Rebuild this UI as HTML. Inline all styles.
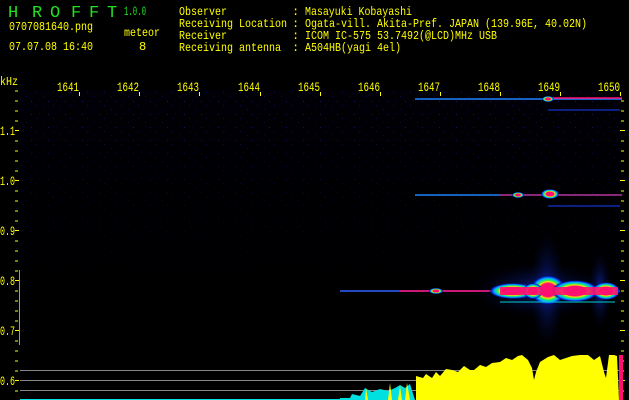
<!DOCTYPE html>
<html><head><style>
html,body{margin:0;padding:0;background:#000;width:629px;height:400px;overflow:hidden}
svg{display:block}
text{font-family:"Liberation Mono","DejaVu Sans Mono",monospace}
</style></head><body>
<svg width="629" height="400" viewBox="0 0 629 400" xmlns="http://www.w3.org/2000/svg">
<defs>
<pattern id="nz" width="17" height="13" patternUnits="userSpaceOnUse">
<rect width="17" height="13" fill="#000006"/>
<rect x="2" y="1" width="1" height="1" fill="#0c1458"/>
<rect x="9" y="5" width="1" height="1" fill="#080e48"/>
<rect x="14" y="10" width="1" height="1" fill="#101a70"/>
<rect x="5" y="9" width="1" height="1" fill="#060a38"/>
</pattern>
<linearGradient id="fade" x1="0" y1="0" x2="0" y2="1">
<stop offset="0" stop-color="#000" stop-opacity="0"/>
<stop offset="0.4" stop-color="#000" stop-opacity="0.6"/>
<stop offset="0.8" stop-color="#000" stop-opacity="1"/>
</linearGradient>
<radialGradient id="blob">
<stop offset="0" stop-color="#ff1070"/>
<stop offset="0.45" stop-color="#ff1070"/>
<stop offset="0.55" stop-color="#ffe000"/>
<stop offset="0.65" stop-color="#20f060"/>
<stop offset="0.78" stop-color="#00b0ff"/>
<stop offset="0.9" stop-color="#0020d0"/>
<stop offset="1" stop-color="#000020" stop-opacity="0"/>
</radialGradient>
<radialGradient id="glow">
<stop offset="0" stop-color="#1030d0" stop-opacity="0.7"/>
<stop offset="1" stop-color="#000020" stop-opacity="0"/>
</radialGradient>
</defs>
<rect x="20" y="90" width="603" height="310" fill="url(#nz)"/>
<rect x="20" y="90" width="603" height="310" fill="url(#fade)"/>
<!-- header -->
<g fill="#20e020" font-size="17"><text x="8" y="17">H</text><text x="32" y="17">R</text><text x="50" y="17">O</text><text x="71" y="17">F</text><text x="89" y="17">F</text><text x="107" y="17">T</text></g>
<text x="124" y="15" fill="#20e020" font-size="13" textLength="22" lengthAdjust="spacingAndGlyphs">1.0.0</text>
<g fill="#ffff00" font-size="12">
<text x="9" y="30" textLength="84" lengthAdjust="spacingAndGlyphs">0707081640.png</text>
<text x="124" y="36" textLength="36" lengthAdjust="spacingAndGlyphs">meteor</text>
<text x="9" y="50" textLength="84" lengthAdjust="spacingAndGlyphs">07.07.08 16:40</text>
<text x="139" y="50">8</text>
<text x="179" y="15" textLength="48" lengthAdjust="spacingAndGlyphs">Observer</text>
<text x="179" y="27" textLength="108" lengthAdjust="spacingAndGlyphs">Receiving Location</text>
<text x="179" y="39" textLength="48" lengthAdjust="spacingAndGlyphs">Receiver</text>
<text x="179" y="51" textLength="102" lengthAdjust="spacingAndGlyphs">Receiving antenna</text>
<text x="292" y="15">:</text><text x="292" y="27">:</text><text x="292" y="39">:</text><text x="292" y="51">:</text>
<text x="305" y="15" textLength="107" lengthAdjust="spacingAndGlyphs">Masayuki Kobayashi</text>
<text x="305" y="27" textLength="282" lengthAdjust="spacingAndGlyphs">Ogata-vill. Akita-Pref. JAPAN (139.96E, 40.02N)</text>
<text x="305" y="39" textLength="192" lengthAdjust="spacingAndGlyphs">ICOM IC-575 53.7492(@LCD)MHz USB</text>
<text x="305" y="51" textLength="96" lengthAdjust="spacingAndGlyphs">A504HB(yagi 4el)</text>
<text x="0" y="85" textLength="18" lengthAdjust="spacingAndGlyphs">kHz</text>
</g>
<g fill="#ffff00" font-size="13">
<text x="57" y="91" textLength="22" lengthAdjust="spacingAndGlyphs">1641</text><text x="117" y="91" textLength="22" lengthAdjust="spacingAndGlyphs">1642</text><text x="177" y="91" textLength="22" lengthAdjust="spacingAndGlyphs">1643</text><text x="238" y="91" textLength="22" lengthAdjust="spacingAndGlyphs">1644</text><text x="298" y="91" textLength="22" lengthAdjust="spacingAndGlyphs">1645</text><text x="358" y="91" textLength="22" lengthAdjust="spacingAndGlyphs">1646</text><text x="418" y="91" textLength="22" lengthAdjust="spacingAndGlyphs">1647</text><text x="478" y="91" textLength="22" lengthAdjust="spacingAndGlyphs">1648</text><text x="538" y="91" textLength="22" lengthAdjust="spacingAndGlyphs">1649</text><text x="598" y="91" textLength="22" lengthAdjust="spacingAndGlyphs">1650</text>
<text x="0" y="135" textLength="15" lengthAdjust="spacingAndGlyphs">1.1</text><text x="0" y="185" textLength="15" lengthAdjust="spacingAndGlyphs">1.0</text><text x="0" y="235" textLength="15" lengthAdjust="spacingAndGlyphs">0.9</text><text x="0" y="285" textLength="15" lengthAdjust="spacingAndGlyphs">0.8</text><text x="0" y="335" textLength="15" lengthAdjust="spacingAndGlyphs">0.7</text><text x="0" y="385" textLength="15" lengthAdjust="spacingAndGlyphs">0.6</text>
</g>
<g stroke="#ffff00" stroke-width="1">
<path d="M79.5 92v4M139.5 92v4M199.5 92v4M260.5 92v4M320.5 92v4M380.5 92v4M440.5 92v4M500.5 92v4M560.5 92v4M620.5 92v4"/>
<path d="M15 91h3M15 101h3M15 111h3M15 121h3M15 141h3M15 151h3M15 161h3M15 171h3M15 191h3M15 201h3M15 211h3M15 221h3M15 241h3M15 251h3M15 261h3M15 271h3M15 291h3M15 301h3M15 311h3M15 321h3M15 341h3M15 351h3M15 361h3M15 371h3M15 391h3"/>
<path d="M15 130.5h4M15 180.5h4M15 230.5h4M15 280.5h4M15 330.5h4M15 380.5h4"/>
<path d="M621 101h3M621 111h3M621 121h3M621 141h3M621 151h3M621 161h3M621 171h3M621 191h3M621 201h3M621 211h3M621 221h3M621 241h3M621 251h3M621 261h3M621 271h3M621 291h3M621 301h3M621 311h3M621 321h3M621 341h3M621 351h3M621 361h3M621 371h3M621 391h3"/>
<path d="M620 130.5h5M620 180.5h5M620 230.5h5M620 280.5h5M620 330.5h5M620 380.5h5"/>
</g>
<line x1="19.5" y1="270" x2="19.5" y2="345" stroke="#999" stroke-width="1"/>
<!-- signals -->
<ellipse cx="547" cy="290" rx="18" ry="60" fill="url(#glow)"/>
<ellipse cx="540" cy="290" rx="70" ry="28" fill="url(#glow)"/>
<ellipse cx="600" cy="290" rx="12" ry="40" fill="url(#glow)"/>
<line x1="340" y1="291" x2="620" y2="291" stroke="#3060ff" stroke-width="1.5"/>
<line x1="400" y1="291" x2="500" y2="291" stroke="#ff1070" stroke-width="1.5"/>
<ellipse cx="436" cy="291" rx="7" ry="3" fill="url(#blob)"/>
<ellipse cx="513" cy="291" rx="24" ry="8" fill="url(#blob)"/>
<ellipse cx="548" cy="290" rx="18" ry="15" fill="url(#blob)"/>
<ellipse cx="575" cy="291" rx="24" ry="11" fill="url(#blob)"/>
<ellipse cx="606" cy="291" rx="14" ry="9" fill="url(#blob)"/>
<ellipse cx="533" cy="291" rx="10" ry="8" fill="url(#blob)"/>
<rect x="500" y="287" width="118" height="8" fill="#ff1070" opacity="0.9"/>
<line x1="500" y1="302" x2="615" y2="302" stroke="#00d0d0" stroke-width="1"/>
<line x1="415" y1="99" x2="622" y2="99" stroke="#2080ff" stroke-width="1.5"/>
<line x1="545" y1="98" x2="622" y2="98" stroke="#ff1070" stroke-width="1.5"/>
<ellipse cx="548" cy="99" rx="6" ry="3" fill="url(#blob)"/>
<line x1="548" y1="110" x2="620" y2="110" stroke="#1840ff" stroke-width="1"/>
<line x1="415" y1="195" x2="622" y2="195" stroke="#2080ff" stroke-width="1.5"/>
<line x1="500" y1="195" x2="622" y2="195" stroke="#ff1070" stroke-width="1"/>
<ellipse cx="550" cy="194" rx="9" ry="5" fill="url(#blob)"/>
<ellipse cx="518" cy="195" rx="6" ry="3" fill="url(#blob)"/>
<line x1="548" y1="206" x2="620" y2="206" stroke="#1840ff" stroke-width="1"/>
<!-- gray lines -->
<g stroke="#888" stroke-width="1"><line x1="20" y1="370.5" x2="620" y2="370.5"/><line x1="20" y1="380.5" x2="620" y2="380.5"/><line x1="20" y1="390.5" x2="620" y2="390.5"/></g>
<!-- histogram -->
<polygon fill="#00e0e0" points="340,400 340,398 350,398 352,394 360,396 365,388 372,392 380,389 388,391 395,388 400,385 405,388 410,384 415,400"/>
<polygon fill="#ffff00" points="365,400 366,388 368,400 388,400 390,383 392,400 398,400 400,386 402,400 405,400 407,383 410,400 416,400 416,376 423,378 426,374 432,378 436,372 440,376 446,369 452,370 458,372 464,366 470,370 474,370 480,365 486,367 492,363 500,362 506,358 512,360 518,356 522,355 528,360 532,368 534,380 536,372 540,362 548,357 554,355 560,360 566,358 572,356 580,355 588,355 594,360 600,356 604,372 606,378 609,355 614,355 617,356 619,400"/>
<rect x="619" y="355" width="4" height="45" fill="#ff1070"/>
<line x1="20" y1="399.5" x2="340" y2="399.5" stroke="#00e0e0"/>
</svg>
</body></html>
